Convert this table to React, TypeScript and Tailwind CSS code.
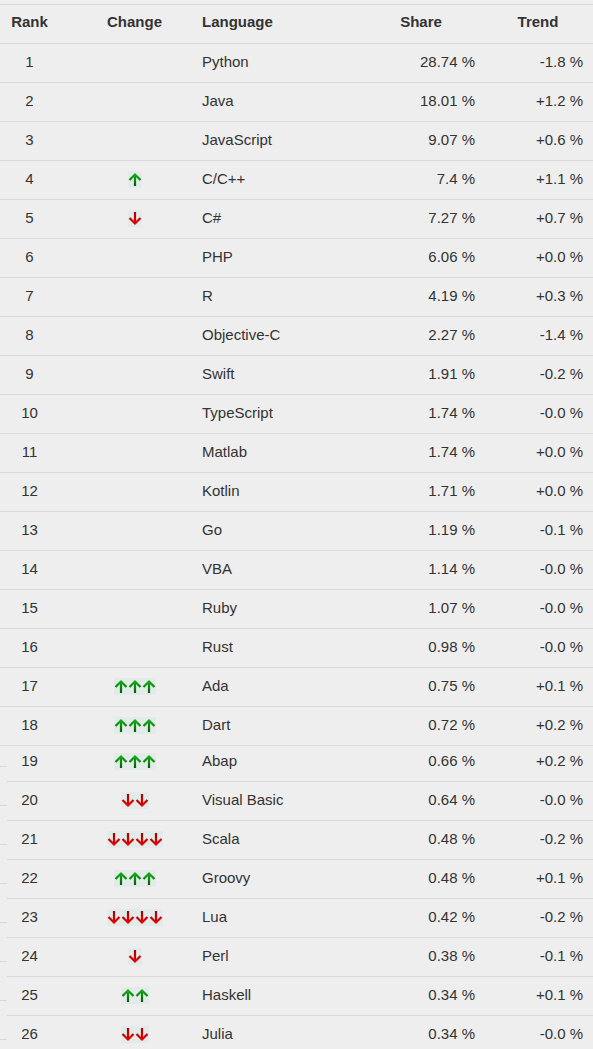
import React from "react";

type Row = { r: number; ch: string; lang: string; share: string; trend: string };

const rows: Row[] = [
  { r: 1, ch: "", lang: "Python", share: "28.74 %", trend: "-1.8 %" },
  { r: 2, ch: "", lang: "Java", share: "18.01 %", trend: "+1.2 %" },
  { r: 3, ch: "", lang: "JavaScript", share: "9.07 %", trend: "+0.6 %" },
  { r: 4, ch: "u", lang: "C/C++", share: "7.4 %", trend: "+1.1 %" },
  { r: 5, ch: "d", lang: "C#", share: "7.27 %", trend: "+0.7 %" },
  { r: 6, ch: "", lang: "PHP", share: "6.06 %", trend: "+0.0 %" },
  { r: 7, ch: "", lang: "R", share: "4.19 %", trend: "+0.3 %" },
  { r: 8, ch: "", lang: "Objective-C", share: "2.27 %", trend: "-1.4 %" },
  { r: 9, ch: "", lang: "Swift", share: "1.91 %", trend: "-0.2 %" },
  { r: 10, ch: "", lang: "TypeScript", share: "1.74 %", trend: "-0.0 %" },
  { r: 11, ch: "", lang: "Matlab", share: "1.74 %", trend: "+0.0 %" },
  { r: 12, ch: "", lang: "Kotlin", share: "1.71 %", trend: "+0.0 %" },
  { r: 13, ch: "", lang: "Go", share: "1.19 %", trend: "-0.1 %" },
  { r: 14, ch: "", lang: "VBA", share: "1.14 %", trend: "-0.0 %" },
  { r: 15, ch: "", lang: "Ruby", share: "1.07 %", trend: "-0.0 %" },
  { r: 16, ch: "", lang: "Rust", share: "0.98 %", trend: "-0.0 %" },
  { r: 17, ch: "uuu", lang: "Ada", share: "0.75 %", trend: "+0.1 %" },
  { r: 18, ch: "uuu", lang: "Dart", share: "0.72 %", trend: "+0.2 %" },
  { r: 19, ch: "uuu", lang: "Abap", share: "0.66 %", trend: "+0.2 %" },
  { r: 20, ch: "dd", lang: "Visual Basic", share: "0.64 %", trend: "-0.0 %" },
  { r: 21, ch: "dddd", lang: "Scala", share: "0.48 %", trend: "-0.2 %" },
  { r: 22, ch: "uuu", lang: "Groovy", share: "0.48 %", trend: "+0.1 %" },
  { r: 23, ch: "dddd", lang: "Lua", share: "0.42 %", trend: "-0.2 %" },
  { r: 24, ch: "d", lang: "Perl", share: "0.38 %", trend: "-0.1 %" },
  { r: 25, ch: "uu", lang: "Haskell", share: "0.34 %", trend: "+0.1 %" },
  { r: 26, ch: "dd", lang: "Julia", share: "0.34 %", trend: "-0.0 %" },
];

function Arrow({ up }: { up: boolean }) {
  const id = up ? "gu" : "gd";
  return (
    <svg width="14" height="17" viewBox="0 0 14 17" className="block">
      <defs>
        <linearGradient id={id} gradientUnits="userSpaceOnUse" x1="0" y1="2" x2="0" y2="15">
          {up ? (
            <>
              <stop offset="0" stopColor="#14b414" />
              <stop offset="1" stopColor="#006000" />
            </>
          ) : (
            <>
              <stop offset="0" stopColor="#a80000" />
              <stop offset="1" stopColor="#ec0000" />
            </>
          )}
        </linearGradient>
      </defs>
      <rect width="14" height="17" fill="#e3eaea" />
      {up ? (
        <g stroke={`url(#${id})`} strokeWidth="2.2" fill="none" strokeLinecap="butt" strokeLinejoin="miter">
          <path d="M7 3.5 L7 15" />
          <path d="M1.5 9 L7 3.5 L12.5 9" />
        </g>
      ) : (
        <g stroke={`url(#${id})`} strokeWidth="2.2" fill="none" strokeLinecap="butt" strokeLinejoin="miter">
          <path d="M7 2 L7 13.5" />
          <path d="M1.5 8 L7 13.5 L12.5 8" />
        </g>
      )}
    </svg>
  );
}

function Change({ ch }: { ch: string }) {
  if (!ch) return null;
  return (
    <div className="flex">
      {ch.split("").map((c, i) => (
        <Arrow key={i} up={c === "u"} />
      ))}
    </div>
  );
}

function Cells({ row, lower }: { row: Row; lower: boolean }) {
  return (
    <>
      <div className={`${lower ? "w-[45px]" : "w-[59px]"} flex items-center justify-center`}>{row.r}</div>
      <div
        className={`${lower ? "w-[140px] pl-[25px]" : "w-[133px] pl-[18px]"} pt-[1px] flex items-center justify-center`}
      >
        <Change ch={row.ch} />
      </div>
      <div className="w-[167px] pl-[10px] flex items-center">{row.lang}</div>
      <div className="w-[124px] pr-[8px] flex items-center justify-end">{row.share}</div>
      <div className="flex-1 pr-[10px] flex items-center justify-end">{row.trend}</div>
    </>
  );
}

export default function App() {
  const top = rows.slice(0, 18);
  const bottom = rows.slice(18);
  return (
    <div
      className="w-[593px] min-h-[1049px] bg-[#eeeeee] text-[#333333] text-[15px] pt-[4px]"
      style={{ fontFamily: '"Liberation Sans", Arial, sans-serif' }}
    >
      <div className="flex h-[40px] pb-[4px] border-y border-[#d8d8d8] font-bold">
        <div className="w-[59px] flex items-center justify-center">Rank</div>
        <div className="w-[133px] pl-[18px] flex items-center justify-center">Change</div>
        <div className="w-[167px] pl-[10px] flex items-center">Language</div>
        <div className="w-[124px] flex items-center justify-center">Share</div>
        <div className="flex-1 flex items-center justify-center">Trend</div>
      </div>
      {top.map((row) => (
        <div key={row.r} className="flex h-[39px] pb-[2px] border-b border-[#d8d8d8]">
          <Cells row={row} lower={false} />
        </div>
      ))}
      <div className="flex">
        <div className="w-[7px] flex flex-col">
          <div className="h-[21px] border-b border-[#d8d8d8]" />
          {Array.from({ length: 7 }).map((_, i) => (
            <div key={i} className="h-[39px] border-b border-[#d8d8d8]" />
          ))}
        </div>
        <div className="flex-1 flex flex-col">
          {bottom.map((row, i) => (
            <div
              key={row.r}
              className={`flex ${i === 0 ? "h-[36px] pb-[5px]" : "h-[39px] pb-[2px]"} border-b border-[#d8d8d8]`}
            >
              <Cells row={row} lower={true} />
            </div>
          ))}
        </div>
      </div>
    </div>
  );
}
